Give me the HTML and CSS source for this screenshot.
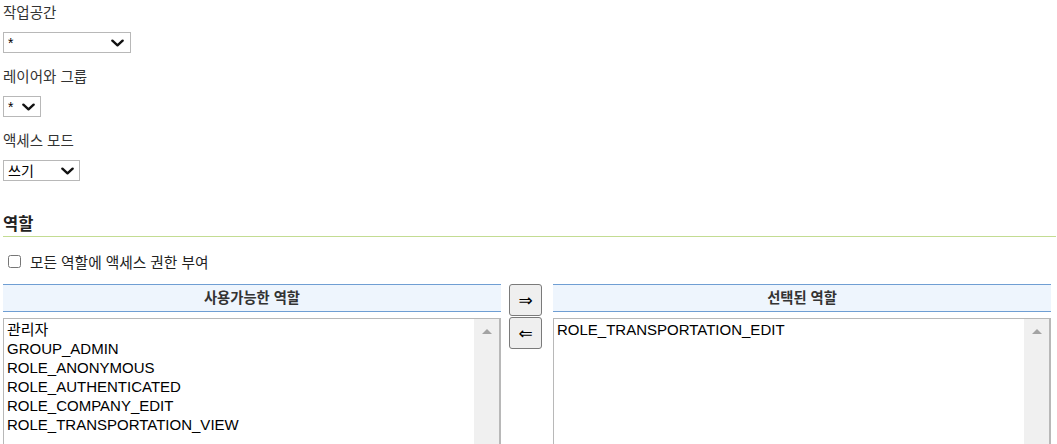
FILE: index.html
```html
<!DOCTYPE html>
<html lang="ko">

<head>
    <meta charset="UTF-8">
    <title>데이터 규칙</title>
    <link rel="stylesheet" href="styles.css">
</head>

<body>
    <div class="field">
        <label for="workspace">작업공간</label>
        <span class="select-wrap wide">
            <select id="workspace"><option>*</option></select>
            <svg class="chevron" viewBox="0 0 14 8"><path d="M1.5 1.5 L7 6.5 L12.5 1.5" /></svg>
        </span>
    </div>
    <div class="field">
        <label for="layer">레이어와 그룹</label>
        <span class="select-wrap narrow">
            <select id="layer"><option>*</option></select>
            <svg class="chevron" viewBox="0 0 14 8"><path d="M1.5 1.5 L7 6.5 L12.5 1.5" /></svg>
        </span>
    </div>
    <div class="field">
        <label for="mode">액세스 모드</label>
        <span class="select-wrap mid">
            <select id="mode"><option>쓰기</option></select>
            <svg class="chevron" viewBox="0 0 14 8"><path d="M1.5 1.5 L7 6.5 L12.5 1.5" /></svg>
        </span>
    </div>

    <h3 class="section-title">역할</h3>
    <label class="check-all">
        <input type="checkbox">
        <span>모든 역할에 액세스 권한 부여</span>
    </label>

    <div class="palette">
        <div class="panel">
            <div class="panel-head">사용가능한 역할</div>
            <div class="listbox">
                <ul>
                    <li>관리자</li>
                    <li>GROUP_ADMIN</li>
                    <li>ROLE_ANONYMOUS</li>
                    <li>ROLE_AUTHENTICATED</li>
                    <li>ROLE_COMPANY_EDIT</li>
                    <li>ROLE_TRANSPORTATION_VIEW</li>
                </ul>
                <div class="scrollbar"><span class="arrow-up"></span></div>
            </div>
        </div>
        <div class="moves">
            <button type="button">&rArr;</button>
            <button type="button">&lArr;</button>
        </div>
        <div class="panel">
            <div class="panel-head">선택된 역할</div>
            <div class="listbox">
                <ul>
                    <li>ROLE_TRANSPORTATION_EDIT</li>
                </ul>
                <div class="scrollbar"><span class="arrow-up"></span></div>
            </div>
        </div>
    </div>
</body>

</html>
```

FILE: styles.css
```css
body {
    margin: 0;
    padding: 0 1px 0 3px;
    font-family: "Liberation Sans", "Noto Sans CJK KR", sans-serif;
    font-size: 14.5px;
    color: #333;
    background: #fff;
}
/*폼 항목*/

.field {
    padding-top: 4px;
}

.field label {
    display: block;
    height: 18px;
    line-height: 18px;
    margin-bottom: 10px;
}

.select-wrap {
    display: block;
    position: relative;
    height: 21px;
    margin-bottom: 11px;
}

.select-wrap select {
    -webkit-appearance: none;
    appearance: none;
    box-sizing: border-box;
    height: 21px;
    margin: 0;
    padding: 0 0 0 4px;
    border: 1px solid #b8b8b8;
    border-radius: 0;
    background: #fff;
    font-family: "Liberation Sans", "Noto Sans CJK KR", sans-serif;
    font-size: 14px;
    color: #000;
}

.wide select {
    width: 128px;
}

.narrow select {
    width: 38px;
}

.mid select {
    width: 77px;
}

.chevron {
    position: absolute;
    top: 7px;
    width: 13px;
    height: 8px;
    pointer-events: none;
}

.chevron path {
    fill: none;
    stroke: #111;
    stroke-width: 2.6;
    stroke-linecap: round;
    stroke-linejoin: round;
}

.wide .chevron {
    left: 108px;
}

.narrow .chevron {
    left: 19px;
}

.mid .chevron {
    left: 58px;
}
/*역할*/

.section-title {
    margin: 33px 0 0;
    padding-bottom: 1px;
    height: 21px;
    line-height: 21px;
    font-size: 16.5px;
    font-weight: bold;
    color: #222;
    border-bottom: 1px solid #c3dc92;
}

.check-all {
    display: flex;
    align-items: center;
    height: 20px;
    margin-top: 14px;
    font-size: 14.7px;
    color: #222;
}

.check-all input {
    width: 13px;
    height: 13px;
    margin: 0 9px 0 5px;
}

.palette {
    display: grid;
    grid-template-columns: 498px 52px 498px;
    margin-top: 13px;
}

.panel-head {
    height: 26px;
    line-height: 26px;
    text-align: center;
    font-weight: bold;
    font-size: 14.3px;
    color: #333;
    background: #eef5fd;
    border-top: 1px solid #6f9ed3;
    border-bottom: 1px solid #6f9ed3;
}

.listbox {
    display: flex;
    height: 140px;
    margin-top: 6px;
    border: 1px solid #b8b8b8;
    border-right-width: 2px;
    background: #fff;
}

.listbox ul {
    flex: 1;
    list-style: none;
    margin: 0;
    padding: 1px 3px 0;
    font-size: 15px;
    line-height: 19px;
    color: #000;
}

.scrollbar {
    width: 25px;
    background: #f0f0f0;
    display: flex;
    justify-content: center;
}

.arrow-up {
    width: 0;
    height: 0;
    margin-top: 10px;
    border-left: 5.5px solid transparent;
    border-right: 5.5px solid transparent;
    border-bottom: 5px solid #a3a3a3;
}

.moves {
    display: flex;
    flex-direction: column;
    gap: 1px;
    padding-left: 8px;
}

.moves button {
    width: 33px;
    height: 32px;
    margin: 0;
    padding: 0;
    border: 1px solid #7a7a7a;
    border-radius: 3px;
    background: #efefef;
    font-family: "DejaVu Sans", sans-serif;
    font-size: 17px;
    color: #000;
}
```
